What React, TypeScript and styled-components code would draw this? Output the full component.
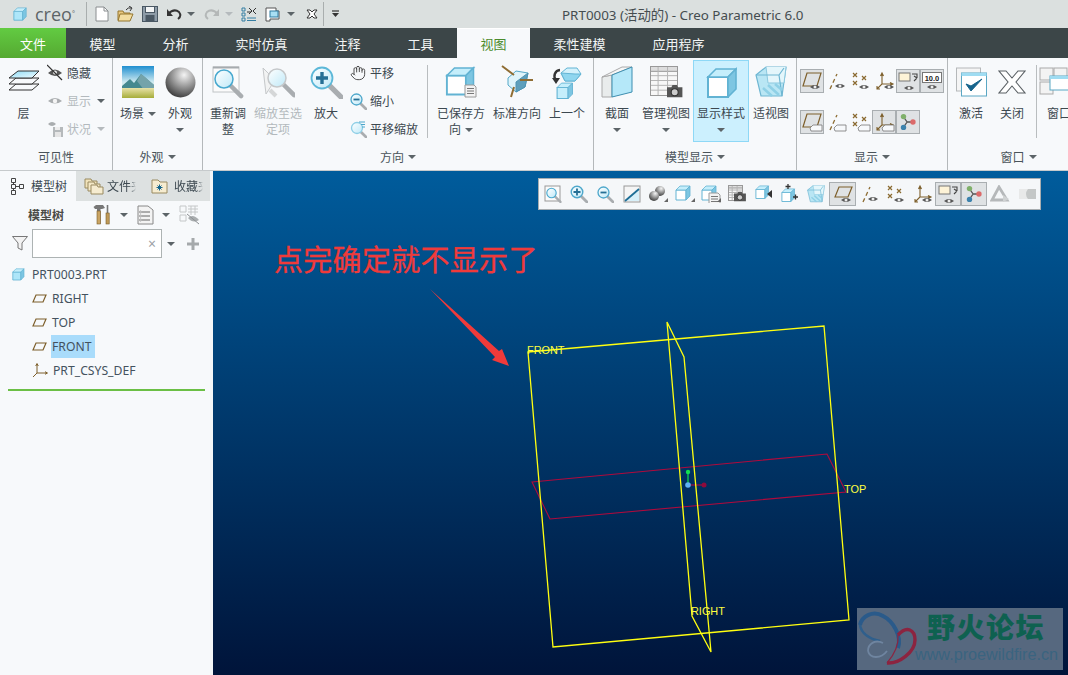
import React from "react";
import styled, { createGlobalStyle } from "styled-components";
import { Hand } from "lucide-react";

const GlobalStyle = createGlobalStyle`
  html, body {
    margin: 0;
    padding: 0;
    background: #f7f9fb;
  }
  body {
    font-family: "Noto Sans", "Noto Sans CJK SC", sans-serif;
    font-size: 12px;
    color: #3c4850;
  }
  * {
    box-sizing: border-box;
  }
`;

const Svg = styled.svg`
  display: block;
  flex-shrink: 0;
`;

type IconProps = { w?: number; h?: number; children: React.ReactNode };

const Ico = ({ w = 18, h = 18, children }: IconProps) => (
  <Svg width={w} height={h} viewBox={`0 0 ${w} ${h}`} fill="none">
    {children}
  </Svg>
);

/* drawing pieces shared by the icons */

const Defs = () => (
  <svg width="0" height="0" style={{ position: "absolute" }}>
    <defs>
      <linearGradient id="sky" x1="0" y1="0" x2="0" y2="1">
        <stop offset="0" stopColor="#1f8fd0" />
        <stop offset="0.5" stopColor="#cfeaf0" />
        <stop offset="1" stopColor="#e8efe0" />
      </linearGradient>
      <linearGradient id="ground" x1="0" y1="0" x2="0" y2="1">
        <stop offset="0" stopColor="#e8e2a8" />
        <stop offset="1" stopColor="#a6ad3a" />
      </linearGradient>
      <radialGradient id="ball" cx="0.62" cy="0.25" r="0.85">
        <stop offset="0" stopColor="#f4f4f4" />
        <stop offset="0.45" stopColor="#9a9a9a" />
        <stop offset="1" stopColor="#2c2c2c" />
      </radialGradient>
      <linearGradient id="layerTop" x1="0" y1="0" x2="1" y2="1">
        <stop offset="0" stopColor="#8fdcf5" />
        <stop offset="1" stopColor="#f0fbff" />
      </linearGradient>
      <linearGradient id="lens" x1="0" y1="0" x2="1" y2="1">
        <stop offset="0" stopColor="#ffffff" />
        <stop offset="1" stopColor="#bfe9f8" />
      </linearGradient>
    </defs>
  </svg>
);

const Eye = ({ x, y }: { x: number; y: number }) => (
  <g transform={`translate(${x} ${y})`}>
    <path d="M-5 0Q0-4 5 0Q0 4-5 0Z" fill="#555" />
    <circle r="1.5" fill="#eee" />
  </g>
);

const Cross = ({ x, y, c = "#8a6a30" }: { x: number; y: number; c?: string }) => (
  <path d={`M${x - 2} ${y - 2}l4 4m0-4l-4 4`} stroke={c} strokeWidth="1.2" />
);

const Tag = ({ x, y }: { x: number; y: number }) => (
  <path
    d={`M${x} ${y + 3}l3-3h9v6h-11z`}
    fill="#f7f9fb"
    stroke="#777"
    strokeWidth="0.8"
  />
);

const Plane = () => (
  <path d="M3 14L7 4H20L16 14Z" stroke="#7d5f2b" strokeWidth="1.2" />
);
const Axis = () => (
  <path d="M5 19L12 4" stroke="#8d6c32" strokeWidth="1.3" strokeDasharray="4 3" />
);
const Points = () => (
  <>
    <Cross x={6} y={5} />
    <Cross x={15} y={8} />
    <Cross x={6} y={13} />
  </>
);
const Csys = () => (
  <path
    d="M4 19L9 14V4M7.5 6L9 3L10.5 6M9 14H19M17 12.5L20 14L17 15.5M4 16V19H7"
    stroke="#7d5f2b"
    strokeWidth="1.1"
  />
);

const Magnifier = ({ x = 0, y = 0, r = 6, c = "#48a9cf", t = 0.24 }: { x?: number; y?: number; r?: number; c?: string; t?: number }) => (
  <>
    <path
      d={`M${x + r * 0.72} ${y + r * 0.72}L${x + r * 1.9} ${y + r * 1.9}`}
      stroke="#a9adb0"
      strokeWidth={r * 0.5}
      strokeLinecap="round"
    />
    <circle cx={x} cy={y} r={r} fill="url(#lens)" stroke={c} strokeWidth={r * t} />
  </>
);

const CubeShape = ({ s = 1, x = 0, y = 0, face = "#fff" }: { s?: number; x?: number; y?: number; face?: string }) => (
  <g transform={`translate(${x} ${y}) scale(${s})`}>
    <path d="M1 5H11V15H1Z" fill={face} stroke="#62b3d3" strokeWidth="1" />
    <path d="M1 5L5 1H15L11 5Z" fill="#c5eefb" stroke="#62b3d3" strokeWidth="0.8" />
    <path d="M11 5L15 1V11L11 15Z" fill="#7dc6e2" stroke="#62b3d3" strokeWidth="0.8" />
  </g>
);

const DocLines = ({ x, y }: { x: number; y: number }) => (
  <g transform={`translate(${x} ${y})`}>
    <path d="M0 0H9L11 2V12H0Z" fill="#f3f3f3" stroke="#9a9a9a" />
    <path d="M2 3.5H9M2 6H9M2 8.5H9" stroke="#777" />
  </g>
);

const Camera = ({ x, y, s = 1 }: { x: number; y: number; s?: number }) => (
  <g transform={`translate(${x} ${y}) scale(${s})`}>
    <path d="M0 3H4L5 1H9L10 3H14V12H0Z" fill="#555" />
    <circle cx="7" cy="7.5" r="3.2" fill="#ccc" stroke="#333" />
  </g>
);

const TableShape = ({ w, h }: { w: number; h: number }) => (
  <>
    <rect x="0.5" y="0.5" width={w} height={h} fill="#f7f7f7" stroke="#999" />
    <rect x="0.5" y="0.5" width={w} height={h / 6} fill="#ddd" stroke="#999" />
    {[2, 3, 4, 5].map((i) => (
      <path key={i} d={`M1 ${(h / 6) * i}H${w}`} stroke="#b5b5b5" />
    ))}
    <path d={`M${w * 0.3} 1V${h}M${w * 0.65} 1V${h}`} stroke="#b5b5b5" />
  </>
);

const Glass = ({ s = 1 }: { s?: number }) => (
  <g transform={`scale(${s})`}>
    <path d="M1 9L11 1H31L27 30H6Z" fill="#b9e6f4" stroke="#6fb6d2" strokeWidth="1.2" />
    <path d="M11 1L13 17H29L31 1" fill="#e4f6fb" stroke="#8cc9df" />
    <path d="M1 9H24L27 30M24 9L29 2" stroke="#6fb6d2" strokeWidth="1.2" />
    <path d="M8 22L17 30M13 19L24 29M20 18L27 24" stroke="#8fd0e6" strokeWidth="2.5" />
  </g>
);

/* title bar */

const TitleBar = styled.header`
  height: 28px;
  background: #dbe0df;
  display: flex;
  align-items: center;
  flex-shrink: 0;
`;

const LogoBox = styled.div`
  display: flex;
  align-items: center;
  gap: 8px;
  width: 86px;
  padding-left: 13px;
  height: 100%;
`;

const LogoText = styled.span`
  font-family: "Open Sans", sans-serif;
  font-size: 18px;
  color: #5d6568;
  line-height: 28px;

  sup {
    font-size: 7px;
    vertical-align: 5px;
    line-height: 0;
  }
`;

const BarDivider = styled.div`
  width: 1px;
  height: 24px;
  background: #a9aeae;
`;

const QuickBar = styled.div`
  display: flex;
  align-items: center;
  height: 100%;
`;

const QuickSlot = styled.div<{ $w: number }>`
  width: ${(p) => p.$w}px;
  display: flex;
  align-items: center;
  justify-content: center;
`;

const WindowTitle = styled.div`
  margin-left: 216px;
  font-size: 13.4px;
  color: #454d50;
  white-space: nowrap;
`;

/* tabs */

const TabBar = styled.nav`
  height: 30px;
  background: #3c4648;
  display: flex;
  flex-shrink: 0;
`;

const FileTab = styled.div`
  width: 66px;
  background: linear-gradient(180deg, #62cb42 0%, #55a931 100%);
  color: #fff;
  font-size: 13px;
  display: flex;
  align-items: center;
  justify-content: center;
`;

const Tab = styled.div<{ $active?: boolean }>`
  padding: 0 23.5px;
  font-size: 13px;
  display: flex;
  align-items: center;
  color: ${(p) => (p.$active ? "#4b8b2c" : "#f3f5f5")};
  background: ${(p) => (p.$active ? "#f7f9fb" : "transparent")};
  border-top: ${(p) => (p.$active ? "1px solid #fff" : "0")};
`;

/* ribbon */

const Ribbon = styled.section`
  height: 113px;
  background: #f7f9fb;
  border-bottom: 1px solid #c6cacc;
  display: flex;
  flex-shrink: 0;
  overflow: hidden;
`;

const Group = styled.div<{ $w: number }>`
  width: ${(p) => p.$w}px;
  height: 112px;
  flex-shrink: 0;
  border-right: 1px solid #b4b8ba;
  display: flex;
  flex-direction: column;
  overflow: hidden;

  &:last-child {
    border-right: 0;
  }
`;

const GroupBody = styled.div`
  height: 89px;
  display: flex;
  align-items: flex-start;
`;

const GroupLabel = styled.div<{ $shift?: number }>`
  height: 20px;
  display: flex;
  align-items: center;
  justify-content: center;
  gap: 4px;
  padding-left: ${(p) => p.$shift ?? 0}px;
  color: #4a545a;
  white-space: nowrap;
`;

const Caret = styled.i<{ $grey?: boolean }>`
  display: inline-block;
  flex-shrink: 0;
  width: 0;
  height: 0;
  border-left: 4px solid transparent;
  border-right: 4px solid transparent;
  border-top: 4px solid ${(p) => (p.$grey ? "#b5babd" : "#5c6468")};
`;

const BigButton = styled.div<{ $w: number; $grey?: boolean; $on?: boolean }>`
  width: ${(p) => p.$w}px;
  flex-shrink: 0;
  height: ${(p) => (p.$on ? "82px" : "auto")};
  margin-top: ${(p) => (p.$on ? "2px" : "0")};
  padding-top: ${(p) => (p.$on ? "3px" : "6px")};
  background: ${(p) => (p.$on ? "#ccf0fe" : "transparent")};
  border: ${(p) => (p.$on ? "1px solid #8ed8f6" : "0")};
  color: ${(p) => (p.$grey ? "#b3b9bd" : "#3c4850")};
  display: flex;
  flex-direction: column;
  align-items: center;
  text-align: center;
`;

const BigIcon = styled.div`
  height: 36px;
  display: flex;
  align-items: center;
  justify-content: center;
`;

const BigText = styled.div`
  margin-top: 6px;
  line-height: 16px;
  white-space: nowrap;
`;

const CaretLine = styled.div`
  height: 16px;
  display: flex;
  align-items: center;
  justify-content: center;
`;

const InlineCaret = styled(Caret)`
  margin-left: 4px;
  vertical-align: 2px;
`;

const RowCaret = styled(Caret)`
  margin-left: 2px;
`;

const SmallColumn = styled.div<{ $w: number }>`
  width: ${(p) => p.$w}px;
  flex-shrink: 0;
  padding-top: 1px;
  display: flex;
  flex-direction: column;
`;

const SmallRow = styled.div<{ $grey?: boolean; $gap?: number }>`
  height: 28px;
  display: flex;
  align-items: center;
  gap: ${(p) => p.$gap ?? 4}px;
  color: ${(p) => (p.$grey ? "#b3b9bd" : "#3c4850")};
  white-space: nowrap;
`;

const VSep = styled.div<{ $mr?: number }>`
  width: 1px;
  height: 73px;
  margin-top: 7px;
  margin-right: ${(p) => p.$mr ?? 0}px;
  background: #b9bdbf;
  flex-shrink: 0;
`;

const Pad = styled.div<{ $w: number }>`
  width: ${(p) => p.$w}px;
  flex-shrink: 0;
`;

const DisplayGrid = styled.div`
  margin: 11px 0 0 3px;
  display: grid;
  grid-template-columns: repeat(6, 24px);
  grid-auto-rows: 24px;
  row-gap: 17px;
`;

const Cell = styled.div<{ $on?: boolean }>`
  display: flex;
  align-items: center;
  justify-content: center;
  background: ${(p) => (p.$on ? "#dfe2e4" : "transparent")};
  border: 1px solid ${(p) => (p.$on ? "#a9aeb1" : "transparent")};
`;

/* main area */

const Main = styled.main`
  flex: 1;
  display: flex;
  min-height: 0;
`;

const Panel = styled.aside`
  width: 213px;
  flex-shrink: 0;
  background: #f7f9fb;
  border-right: 3px solid #f3f6f8;
  display: flex;
  flex-direction: column;
`;

const PanelTabs = styled.div`
  height: 30px;
  background: #dde1e1;
  display: flex;
`;

const PanelTab = styled.div<{ $w: number; $active?: boolean; $gap: number; $pad: number }>`
  width: ${(p) => p.$w}px;
  padding-left: ${(p) => p.$pad}px;
  gap: ${(p) => p.$gap}px;
  background: ${(p) => (p.$active ? "#f7f9fb" : "transparent")};
  display: flex;
  align-items: center;
  white-space: nowrap;
  overflow: hidden;
  flex-shrink: 0;
`;

const FadedText = styled.span`
  display: block;
  width: 29px;
  overflow: hidden;
  -webkit-mask-image: linear-gradient(90deg, #000 78%, transparent 100%);
  mask-image: linear-gradient(90deg, #000 78%, transparent 100%);
`;

const TreeTools = styled.div`
  height: 28px;
  padding-left: 28px;
  display: flex;
  align-items: center;
`;

const TreeToolsTitle = styled.span`
  width: 65px;
  font-weight: 700;
  color: #4a4a46;
`;

const FilterRow = styled.div`
  height: 29px;
  padding-left: 12px;
  display: flex;
  align-items: center;
`;

const SearchBox = styled.div`
  width: 130px;
  height: 29px;
  margin-left: 4px;
  margin-right: 5px;
  background: #fff;
  border: 1px solid #adb3b3;
  display: flex;
  align-items: center;
  justify-content: flex-end;
  padding-right: 5px;
  color: #9ca2a5;
  font-size: 14px;
`;

const Tree = styled.ul`
  list-style: none;
  margin: 5px 0 0 8px;
  padding: 0 0 7px;
  width: 197px;
  border-bottom: 2px solid #6bbf45;
`;

const TreeRow = styled.li<{ $depth?: number }>`
  height: 24px;
  padding-left: ${(p) => (p.$depth ? 24 : 4)}px;
  display: flex;
  align-items: center;
  gap: ${(p) => (p.$depth ? 4 : 6)}px;
  white-space: nowrap;
  color: #44525e;

  &:first-child {
    height: 23px;
  }
`;

const TreeText = styled.span<{ $sel?: boolean }>`
  height: 23px;
  line-height: 23px;
  padding: 0 ${(p) => (p.$sel ? 4 : 2)}px 0 1px;
  font-size: 12.2px;
  background: ${(p) => (p.$sel ? "#a9dcfb" : "transparent")};
`;

const Viewport = styled.div`
  position: relative;
  flex: 1;
  overflow: hidden;
  background: linear-gradient(180deg, #005c9c 0%, #00143a 100%);
`;

const Scene = styled.svg`
  position: absolute;
  left: 0;
  top: 0;
`;

const FloatBar = styled.div`
  position: absolute;
  left: 325px;
  top: 7px;
  width: 503px;
  height: 32px;
  padding-left: 1px;
  background: #f5f7f9;
  border: 1px solid #a8adb0;
  display: flex;
  align-items: center;
`;

const FloatCell = styled.div<{ $on?: boolean }>`
  width: 26.5px;
  height: 24px;
  display: flex;
  align-items: center;
  justify-content: center;
  background: ${(p) => (p.$on ? "#dfe2e4" : "transparent")};
  box-shadow: ${(p) => (p.$on ? "inset 0 0 0 1px #a9aeb1" : "none")};
`;

const Note = styled.div`
  position: absolute;
  left: 61px;
  top: 69px;
  font-family: "Noto Sans CJK SC", sans-serif;
  font-size: 29px;
  line-height: 36px;
  letter-spacing: 0.3px;
  color: #f03a3a;
  -webkit-text-stroke: 0.3px #f03a3a;
  white-space: nowrap;
`;

const Watermark = styled.div`
  position: absolute;
  left: 644px;
  top: 437px;
  width: 206px;
  height: 62px;
  background: #56687f;
  display: flex;
`;

const MarkText = styled.div`
  display: flex;
  flex-direction: column;
  align-items: flex-end;
  flex: 1;
  padding-right: 5px;
`;

const MarkTitle = styled.div`
  font-family: "Noto Sans CJK SC", sans-serif;
  font-weight: 900;
  font-size: 28px;
  line-height: 36px;
  letter-spacing: 1.5px;
  color: #0e6150;
  margin-right: 13px;
`;

const MarkUrl = styled.div`
  font-family: "Liberation Sans", sans-serif;
  font-size: 16.2px;
  line-height: 20px;
  color: #3a6480;
  white-space: nowrap;
  margin-left: -6px;
`;

/* icons */

const hideIcon = (
  <Ico w={16} h={18}>
    <path d="M1 9Q8 2 15 9Q8 15 1 9Z" fill="#555" />
    <circle cx="8" cy="8.5" r="2" fill="#eee" />
    <path d="M0 1L15 16" stroke="#333" strokeWidth="1.2" />
  </Ico>
);

const showIcon = (
  <Ico w={16} h={16}>
    <path d="M1 8Q8 2 15 8Q8 13 1 8Z" fill="#a9adaf" />
    <circle cx="8" cy="8" r="2.2" fill="#f4f4f4" />
  </Ico>
);

const stateIcon = (
  <Ico w={16} h={18}>
    <path d="M1 4Q5 0 9 4Q5 8 1 4Z" fill="#a9adaf" />
    <rect x="6" y="7" width="10" height="10" fill="#b5b9bb" />
    <rect x="8" y="7" width="5" height="3" fill="#eee" />
    <rect x="8" y="12" width="6" height="5" fill="#e5e5e5" />
  </Ico>
);

const layersIcon = (
  <Ico w={32} h={26}>
    <path d="M1 21L8 15H31L24 21Z" fill="#f7f9fb" stroke="#333" />
    <path d="M1 15L8 9H31L24 15Z" fill="#f7f9fb" stroke="#333" />
    <path d="M1 9L10 2H31L24 9Z" fill="url(#layerTop)" stroke="#333" />
  </Ico>
);

const sceneIcon = (
  <Ico w={32} h={32}>
    <rect width="32" height="32" fill="url(#sky)" />
    <path d="M0 20L8 13L12 17L19 8L32 19V26H0Z" fill="#45898f" />
    <path d="M15 15L19 8L23 11L32 19V24L22 24Z" fill="#75a3aa" />
    <rect y="22" width="32" height="10" fill="url(#ground)" />
  </Ico>
);

const sphereIcon = (
  <Ico w={31} h={31}>
    <circle cx="15.5" cy="15.5" r="15" fill="url(#ball)" />
  </Ico>
);

const refitIcon = (
  <Ico w={33} h={33}>
    <rect x="1" y="1" width="26" height="25" fill="#fbfbfb" stroke="#c0c4c6" />
    <path d="M1 1.5H27" stroke="#a6abae" strokeWidth="2" />
    <Magnifier x={12} y={13} r={9} t={0.17} />
  </Ico>
);

const zoomSelIcon = (
  <Ico w={33} h={33}>
    <path d="M1 2L13 14L4 28Z" fill="#f2f3f3" stroke="#c5c8ca" />
    <path d="M8 24L14 30" stroke="#d5d7d8" strokeWidth="4" />
    <Magnifier x={15} y={12} r={9} c="#c5c8ca" t={0.17} />
  </Ico>
);

const zoomInIcon = (
  <Ico w={33} h={33}>
    <Magnifier x={12} y={12} r={10.5} c="#5cb8d8" t={0.17} />
    <path d="M12 6V18M6 12H18" stroke="#256f95" strokeWidth="3.4" />
  </Ico>
);

const zoomOutIcon = (
  <Ico w={17} h={17}>
    <Magnifier x={6.5} y={6.5} r={5.5} c="#4da7cb" />
    <path d="M3.5 6.5H9.5" stroke="#256f95" strokeWidth="1.8" />
  </Ico>
);

const panZoomIcon = (
  <Ico w={17} h={17}>
    <Magnifier x={7} y={7} r={5.5} c="#8fcfe6" />
    <path d="M9 1H15M11 3.5H15M12 6H15" stroke="#4da7cb" />
  </Ico>
);

const savedViewIcon = (
  <Ico w={34} h={34}>
    <CubeShape s={1.9} x={1} y={1} />
    <DocLines x={21} y={20} />
  </Ico>
);

const standardViewIcon = (
  <Ico w={34} h={34}>
    <path d="M8 13L16 6L28 8L25 22L16 27L8 20Z" fill="#dff4fb" stroke="#55a8c8" />
    <path d="M16 17L28 8L25 22L16 27Z" fill="#5e9fbc" stroke="#4e93b1" />
    <path d="M2 1L14 10M20 15H33M11 32L14 22" stroke="#8f6d33" strokeWidth="2" />
  </Ico>
);

const prevViewIcon = (
  <Ico w={34} h={34}>
    <path d="M11 8L17 3H27L31 9L25 16H15Z" fill="#d3f1fb" stroke="#63b4d4" />
    <path d="M11 8L25 9L31 9L25 16H15Z" fill="#8fd6ef" stroke="#63b4d4" />
    <CubeShape s={1.1} x={6} y={17} face="#c5eefb" />
    <path d="M10 5A6 6 0 0 0 6 15" stroke="#333" strokeWidth="2.4" />
    <path d="M2 13L10 13L6 19Z" fill="#333" />
  </Ico>
);

const sectionIcon = (
  <Ico w={32} h={32}>
    <path d="M1 11L11 9V31H1Z" fill="#e9ecec" stroke="#aaa" />
    <path d="M1 11L21 1H31L11 9Z" fill="#f7f7f7" stroke="#aaa" />
    <path d="M11 9L31 1V26L11 31Z" fill="#b5e8f9" stroke="#3d8eb0" />
  </Ico>
);

const manageIcon = (
  <Ico w={33} h={33}>
    <TableShape w={27} h={29} />
    <Camera x={17} y={18} s={1.1} />
  </Ico>
);

const styleIcon = (
  <Ico w={32} h={32}>
    <CubeShape s={2} x={1} y={1} />
  </Ico>
);

const closeIcon = (
  <Ico w={28} h={24}>
    <path
      d="M1 1H8L14 8L20 1H27L18 12L27 23H20L14 16L8 23H1L10 12Z"
      fill="#fff"
      stroke="#5a6064"
      strokeWidth="1.1"
    />
  </Ico>
);

const activateIcon = (
  <Ico w={31} h={30}>
    <rect x="0.5" y="1" width="24" height="23" fill="#f5f5f5" stroke="#b5b8ba" />
    <rect x="5.5" y="6" width="25" height="23" fill="#fff" stroke="#5aa7c4" />
    <rect x="5.5" y="6" width="25" height="3" fill="#9fdcf2" />
    <path d="M10 17L15 24L26 12L15 19Z" fill="#17648c" stroke="#17648c" />
  </Ico>
);

const windowsIcon = (
  <Ico w={40} h={30}>
    <rect x="1" y="1" width="13" height="12" fill="#f3f3f3" stroke="#aaa" />
    <rect x="15" y="1" width="13" height="9" fill="#f3f3f3" stroke="#aaa" />
    <rect x="1" y="15" width="13" height="12" fill="#f3f3f3" stroke="#aaa" />
    <rect x="11" y="9" width="26" height="14" fill="#fff" stroke="#5aa7c4" />
    <rect x="11" y="9" width="26" height="3" fill="#9fdcf2" />
  </Ico>
);

const repaintIcon = (
  <Ico w={18} h={18}>
    <rect x="1" y="1" width="16" height="16" fill="#f5f5f5" stroke="#999" />
    <path d="M2 16L16 3V16Z" fill="#d8f0f9" />
    <path d="M2 16L16 4" stroke="#1e6e96" strokeWidth="1.8" />
  </Ico>
);

const shadeIcon = (
  <Ico w={20} h={18}>
    <circle cx="12" cy="6" r="5" fill="url(#ball)" />
    <circle cx="6" cy="11" r="5" fill="url(#ball)" />
    <path d="M16 17H20V13Z" fill="#666" />
  </Ico>
);

const cubeCornerIcon = (
  <Ico w={20} h={18}>
    <CubeShape />
    <path d="M16 17H20V13Z" fill="#666" />
  </Ico>
);

const savedSmallIcon = (
  <Ico w={20} h={18}>
    <CubeShape />
    <DocLines x={8} y={8} />
    <path d="M16 17H20V13Z" fill="#666" />
  </Ico>
);

const manageSmallIcon = (
  <Ico w={18} h={18}>
    <TableShape w={14} h={15} />
    <Camera x={6} y={6} s={0.85} />
  </Ico>
);

const cubeInIcon = (
  <Ico w={18} h={18}>
    <CubeShape s={0.9} />
    <path d="M12 9L17 5V13Z" fill="#333" />
  </Ico>
);

const cubePlusIcon = (
  <Ico w={18} h={20}>
    <CubeShape s={0.9} y={4} />
    <path d="M7 0V5M4.5 2.5H9.5M12 13H17M14.5 10.5V15.5" stroke="#333" strokeWidth="1.3" />
  </Ico>
);

const spinIcon = (
  <Svg width={18} height={18} viewBox="0 0 20 20" fill="none">
    <path d="M4 3L9 10L4 17M9 10H16" stroke="#555" strokeWidth="1.4" />
    <circle cx="5" cy="4" r="3" fill="#7fb06a" />
    <circle cx="15.5" cy="10" r="3" fill="#db6a6a" />
    <circle cx="5" cy="16" r="3" fill="#3d83ad" />
  </Svg>
);

const markIcon = (inner: React.ReactNode, bottom: React.ReactNode) => (
  <Ico w={22} h={22}>
    {inner}
    {bottom}
  </Ico>
);

const noteMark = (
  <>
    <rect x="2" y="3" width="11" height="8" fill="#fdf3d7" stroke="#777" />
    <path d="M15 4H20V8M20 8L17 6M20 8L17 11" stroke="#444" strokeWidth="1.1" />
  </>
);

const numberMark = (
  <>
    <rect x="1.5" y="2.5" width="19" height="10" fill="#fff" stroke="#777" />
    <text
      x="11"
      y="10.5"
      textAnchor="middle"
      fontFamily="Liberation Sans, sans-serif"
      fontWeight="700"
      fontSize="7.5"
      fill="#222"
    >
      10.0
    </text>
  </>
);

const PlanePart = () => (
  <path d="M2 16L6 3H20L16 16Z" fill="none" stroke="#7d5f2b" strokeWidth="1.2" />
);

const displayCells: [React.ReactNode, boolean][] = [
  [markIcon(<PlanePart />, <Eye x={14} y={17} />), true],
  [markIcon(<Axis />, <Eye x={15} y={16} />), false],
  [markIcon(<Points />, <Eye x={15} y={17} />), false],
  [markIcon(<Csys />, <Eye x={16} y={17} />), false],
  [markIcon(noteMark, <Eye x={12} y={18} />), true],
  [markIcon(numberMark, <Eye x={11} y={17} />), true],
  [markIcon(<PlanePart />, <Tag x={9} y={14} />), true],
  [markIcon(<Axis />, <Tag x={9} y={14} />), false],
  [markIcon(<Points />, <Tag x={9} y={14} />), false],
  [markIcon(<Csys />, <Tag x={9} y={14} />), true],
  [spinIcon, true],
];

const toolbarCells: [React.ReactNode, boolean][] = [
  [
    <Ico w={18} h={18} key="a">
      <rect x="1" y="1" width="15" height="15" fill="#fbfbfb" stroke="#999" />
      <Magnifier x={7.5} y={8} r={4.7} />
    </Ico>,
    false,
  ],
  [
    <Ico w={18} h={18} key="b">
      <Magnifier x={7} y={7} r={5.8} c="#4da7cb" />
      <path d="M7 3.5V10.5M3.5 7H10.5" stroke="#256f95" strokeWidth="1.8" />
    </Ico>,
    false,
  ],
  [zoomOutIcon, false],
  [repaintIcon, false],
  [shadeIcon, false],
  [cubeCornerIcon, false],
  [savedSmallIcon, false],
  [manageSmallIcon, false],
  [cubeInIcon, false],
  [cubePlusIcon, false],
  [
    <Ico w={18} h={18} key="g">
      <Glass s={0.56} />
    </Ico>,
    false,
  ],
  [markIcon(<Plane />, <Eye x={14} y={17} />), true],
  [markIcon(<Axis />, <Eye x={15} y={16} />), false],
  [markIcon(<Points />, <Eye x={15} y={17} />), false],
  [markIcon(<Csys />, <Eye x={16} y={17} />), false],
  [markIcon(noteMark, <Eye x={12} y={18} />), true],
  [spinIcon, true],
  [
    <Ico w={20} h={18} key="t">
      <path d="M9 2L17 15H2Z" stroke="#b5b8ba" strokeWidth="2.8" />
      <path d="M13 10L19 14L13 17Z" fill="#cfd2d3" />
    </Ico>,
    false,
  ],
  [
    <Ico w={20} h={14} key="u">
      <path d="M2 2H19V12H2Z" fill="#c4c7c7" />
      <path d="M2 2H11Q7 7 11 12H2Z" fill="#e8e9e9" />
    </Ico>,
    false,
  ],
];

const treeNodeIcon = (
  <Ico w={14} h={19}>
    <path d="M1.5 1.5H5.5V5.5H1.5ZM1.5 7.5H5.5V11.5H1.5ZM1.5 13.5H5.5V17.5H1.5Z" stroke="#444" />
    <path d="M9.5 7.5H13.5V11.5H9.5Z" stroke="#444" />
    <path d="M3.5 5.5V7.5M3.5 11.5V13.5M5.5 9.5H9.5" stroke="#444" />
  </Ico>
);

const folderStackIcon = (
  <Ico w={20} h={18}>
    <path d="M1 2H7L8 4H13V11H1Z" fill="#f1e3bb" stroke="#998a60" />
    <path d="M4 5H10L11 7H16V14H4Z" fill="#f4e8c7" stroke="#998a60" />
    <path d="M7 8H13L14 10H19V17H7Z" fill="#f6ecd0" stroke="#998a60" />
  </Ico>
);

const favFolderIcon = (
  <Ico w={17} h={16}>
    <path d="M1 2H7L9 4H16V15H1Z" fill="#f6ecd0" stroke="#998a60" />
    <path d="M8.5 6.5V12.5M5.5 9.5H11.5M6.5 7.5L10.5 11.5M10.5 7.5L6.5 11.5" stroke="#13648c" strokeWidth="1" />
  </Ico>
);

const toolsIcon = (
  <Ico w={18} h={20}>
    <path d="M0.5 2L3 0H10L12 3L9 4H7.5V19H4V4H2Z" fill="#777" />
    <rect x="4" y="6" width="3.5" height="13" fill="#c9a463" stroke="#7a5c2a" strokeWidth="0.6" />
    <path d="M14.5 0V8" stroke="#777" strokeWidth="1.6" />
    <rect x="13" y="8" width="3.2" height="11" fill="#bf9a58" stroke="#7a5c2a" strokeWidth="0.6" />
  </Ico>
);

const listIcon = (
  <Ico w={17} h={20}>
    <path d="M1 1H11L16 5V19H1Z" fill="#f3f3f3" stroke="#888" />
    <path d="M5 7H13M5 11H13M5 15H13" stroke="#666" />
    <circle cx="3.5" cy="7" r="1" stroke="#666" strokeWidth="0.6" />
    <circle cx="3.5" cy="11" r="1" stroke="#666" strokeWidth="0.6" />
    <circle cx="3.5" cy="15" r="1" stroke="#666" strokeWidth="0.6" />
  </Ico>
);

const treeEyeIcon = (
  <Ico w={21} h={20}>
    <path d="M1 1H7V7H1ZM1 10H7V16H1ZM9 1H19M9 4H19M9 7H19M12 1V10M16 1V10" stroke="#c4c7c8" />
    <path d="M9 13Q14 8 20 15Q14 19 9 13Z" fill="#a9adaf" />
    <path d="M8 9L20 19" stroke="#8d9194" />
  </Ico>
);

const filterIcon = (
  <Ico w={16} h={15}>
    <path d="M0.5 0.5H15.5L10 7V14L6 12V7Z" fill="#f3f3f3" stroke="#777" />
  </Ico>
);

const planeTreeIcon = (
  <Ico w={15} h={9}>
    <path d="M1 8L4 1H14L11 8Z" stroke="#7d5f2b" strokeWidth="1.2" />
  </Ico>
);

const csysTreeIcon = (
  <Ico w={16} h={15}>
    <path d="M1 14L5 10V1M3.7 3L5 0.5L6.3 3M5 10H15M13 8.7L15.5 10L13 11.3" stroke="#7d5f2b" />
  </Ico>
);

const App = () => {
  return (
    <Page>
      <GlobalStyle />
      <Defs />
      <TitleBar>
        <LogoBox>
          <Ico w={14} h={14}>
            <CubeShape s={0.88} face="#aee6f9" />
          </Ico>
          <LogoText>
            creo<sup>°</sup>
          </LogoText>
        </LogoBox>
        <BarDivider />
        <QuickBar>
          <QuickSlot $w={29}>
            <Ico w={14} h={16}>
              <path d="M1 1H9L13 5V15H1Z" fill="#fff" stroke="#8a8e90" />
              <path d="M9 1V5H13" stroke="#8a8e90" />
            </Ico>
          </QuickSlot>
          <QuickSlot $w={18}>
            <Ico w={17} h={16}>
              <path d="M1 5H6L7 7H13V14H1Z" fill="#e8c77f" stroke="#94762f" />
              <path d="M3 8H16L13 15H1Z" fill="#f3dda0" stroke="#94762f" />
              <path d="M9 4Q11 1 14 2M12 0L15 2L13 5" stroke="#333" />
            </Ico>
          </QuickSlot>
          <QuickSlot $w={31}>
            <Ico w={16} h={16}>
              <rect x="0.5" y="0.5" width="15" height="15" fill="#8e9ca8" stroke="#4a5864" />
              <rect x="3.5" y="0.5" width="9" height="6" fill="#f3f5f6" stroke="#4a5864" />
              <rect x="3.5" y="9" width="9" height="6.5" fill="#4a5864" />
            </Ico>
          </QuickSlot>
          <QuickSlot $w={17}>
            <Ico w={16} h={12}>
              <path d="M2 6Q8 0 13 4Q16 8 12 11" stroke="#333" strokeWidth="2" />
              <path d="M1 1V8H7Z" fill="#333" />
            </Ico>
          </QuickSlot>
          <QuickSlot $w={18}>
            <Caret />
          </QuickSlot>
          <QuickSlot $w={24}>
            <Ico w={16} h={12}>
              <path d="M14 6Q8 0 3 4Q0 8 4 11" stroke="#b4b8b8" strokeWidth="2" />
              <path d="M15 1V8H9Z" fill="#b4b8b8" />
            </Ico>
          </QuickSlot>
          <QuickSlot $w={10}>
            <Caret $grey />
          </QuickSlot>
          <QuickSlot $w={29}>
            <Ico w={16} h={16}>
              <path d="M1 2H4V5H1ZM1 7H4V10H1ZM1 12H4V15H1ZM6 12H15M6 14.5H15" stroke="#357ea3" />
              <path d="M6 6H10M8 2L11 5L8 8M15 2L12 5L15 8" stroke="#333" />
            </Ico>
          </QuickSlot>
          <QuickSlot $w={19}>
            <Ico w={16} h={15}>
              <path d="M1 1H11V4H14V12H5V14H1Z" fill="#fff" stroke="#555" />
              <rect x="5" y="4" width="8" height="6" fill="#a8dff3" stroke="#2f7ca1" />
            </Ico>
          </QuickSlot>
          <QuickSlot $w={18}>
            <Caret />
          </QuickSlot>
          <QuickSlot $w={23}>
            <Ico w={12} h={10}>
              <path
                d="M1 1H4L6 3L8 1H11L8 5L11 9H8L6 7L4 9H1L4 5Z"
                fill="#fff"
                stroke="#333"
              />
            </Ico>
          </QuickSlot>
          <BarDivider />
          <QuickSlot $w={22}>
            <Ico w={9} h={8}>
              <path d="M1 1H8" stroke="#333" strokeWidth="1.2" />
              <path d="M1 3H8L4.5 7Z" fill="#333" />
            </Ico>
          </QuickSlot>
        </QuickBar>
        <WindowTitle>PRT0003 (活动的) - Creo Parametric 6.0</WindowTitle>
      </TitleBar>

      <TabBar>
        <FileTab>文件</FileTab>
        {["模型", "分析", "实时仿真", "注释", "工具"].map((t) => (
          <Tab key={t}>{t}</Tab>
        ))}
        <Tab $active>视图</Tab>
        {["柔性建模", "应用程序"].map((t) => (
          <Tab key={t}>{t}</Tab>
        ))}
      </TabBar>

      <Ribbon>
        <Group $w={113}>
          <GroupBody>
            <BigButton $w={47}>
              <BigIcon>{layersIcon}</BigIcon>
              <BigText>层</BigText>
            </BigButton>
            <SmallColumn $w={65}>
              <SmallRow>
                {hideIcon}
                <span>隐藏</span>
              </SmallRow>
              <SmallRow $grey>
                {showIcon}
                <span>显示</span>
                <RowCaret />
              </SmallRow>
              <SmallRow $grey>
                {stateIcon}
                <span>状况</span>
                <RowCaret $grey />
              </SmallRow>
            </SmallColumn>
          </GroupBody>
          <GroupLabel>可见性</GroupLabel>
        </Group>

        <Group $w={90}>
          <GroupBody>
            <Pad $w={6} />
            <BigButton $w={38}>
              <BigIcon>{sceneIcon}</BigIcon>
              <BigText>
                场景
                <InlineCaret />
              </BigText>
            </BigButton>
            <Pad $w={4} />
            <BigButton $w={38}>
              <BigIcon>{sphereIcon}</BigIcon>
              <BigText>外观</BigText>
              <CaretLine>
                <Caret />
              </CaretLine>
            </BigButton>
          </GroupBody>
          <GroupLabel>
            外观
            <Caret />
          </GroupLabel>
        </Group>

        <Group $w={391}>
          <GroupBody>
            <Pad $w={1} />
            <BigButton $w={48}>
              <BigIcon>{refitIcon}</BigIcon>
              <BigText>
                重新调
                <br />整
              </BigText>
            </BigButton>
            <BigButton $w={52} $grey>
              <BigIcon>{zoomSelIcon}</BigIcon>
              <BigText>
                缩放至选
                <br />
                定项
              </BigText>
            </BigButton>
            <BigButton $w={44}>
              <BigIcon>{zoomInIcon}</BigIcon>
              <BigText>放大</BigText>
            </BigButton>
            <Pad $w={2} />
            <SmallColumn $w={77}>
              <SmallRow $gap={4}>
                <Hand size={16} strokeWidth={1.4} color="#444" />
                <span>平移</span>
              </SmallRow>
              <SmallRow $gap={3}>
                {zoomOutIcon}
                <span>缩小</span>
              </SmallRow>
              <SmallRow $gap={3}>
                {panZoomIcon}
                <span>平移缩放</span>
              </SmallRow>
            </SmallColumn>
            <VSep $mr={7} />
            <BigButton $w={52}>
              <BigIcon>{savedViewIcon}</BigIcon>
              <BigText>
                已保存方
                <br />向
                <InlineCaret />
              </BigText>
            </BigButton>
            <Pad $w={2} />
            <BigButton $w={56}>
              <BigIcon>{standardViewIcon}</BigIcon>
              <BigText>标准方向</BigText>
            </BigButton>
            <BigButton $w={44}>
              <BigIcon>{prevViewIcon}</BigIcon>
              <BigText>上一个</BigText>
            </BigButton>
          </GroupBody>
          <GroupLabel>
            方向
            <Caret />
          </GroupLabel>
        </Group>

        <Group $w={203}>
          <GroupBody>
            <BigButton $w={46}>
              <BigIcon>{sectionIcon}</BigIcon>
              <BigText>截面</BigText>
              <CaretLine>
                <Caret />
              </CaretLine>
            </BigButton>
            <BigButton $w={52}>
              <BigIcon>{manageIcon}</BigIcon>
              <BigText>管理视图</BigText>
              <CaretLine>
                <Caret />
              </CaretLine>
            </BigButton>
            <Pad $w={1} />
            <BigButton $w={56} $on>
              <BigIcon>{styleIcon}</BigIcon>
              <BigText>显示样式</BigText>
              <CaretLine>
                <Caret />
              </CaretLine>
            </BigButton>
            <BigButton $w={44}>
              <BigIcon>
                <Ico w={32} h={32}>
                  <Glass />
                </Ico>
              </BigIcon>
              <BigText>适视图</BigText>
            </BigButton>
          </GroupBody>
          <GroupLabel>
            模型显示
            <Caret />
          </GroupLabel>
        </Group>

        <Group $w={151}>
          <GroupBody>
            <DisplayGrid>
              {displayCells.map(([icon, on], i) => (
                <Cell $on={on} key={i}>
                  {icon}
                </Cell>
              ))}
            </DisplayGrid>
          </GroupBody>
          <GroupLabel>
            显示
            <Caret />
          </GroupLabel>
        </Group>

        <Group $w={121}>
          <GroupBody>
            <BigButton $w={46}>
              <BigIcon>{activateIcon}</BigIcon>
              <BigText>激活</BigText>
            </BigButton>
            <BigButton $w={36}>
              <BigIcon>{closeIcon}</BigIcon>
              <BigText>关闭</BigText>
            </BigButton>
            <Pad $w={6} />
            <VSep />
            <BigButton $w={44}>
              <BigIcon>{windowsIcon}</BigIcon>
              <BigText>窗口</BigText>
            </BigButton>
          </GroupBody>
          <GroupLabel $shift={20}>
            窗口
            <Caret />
          </GroupLabel>
        </Group>
      </Ribbon>

      <Main>
        <Panel>
          <PanelTabs>
            <PanelTab $w={76} $active $gap={7} $pad={10}>
              {treeNodeIcon}
              <span>模型树</span>
            </PanelTab>
            <PanelTab $w={66} $gap={3} $pad={8}>
              {folderStackIcon}
              <FadedText>文件夹</FadedText>
            </PanelTab>
            <PanelTab $w={68} $gap={6} $pad={9}>
              {favFolderIcon}
              <FadedText>收藏夹</FadedText>
            </PanelTab>
          </PanelTabs>
          <TreeTools>
            <TreeToolsTitle>模型树</TreeToolsTitle>
            {toolsIcon}
            <Pad $w={9} />
            <Caret />
            <Pad $w={9} />
            {listIcon}
            <Pad $w={8} />
            <Caret />
            <Pad $w={9} />
            {treeEyeIcon}
          </TreeTools>
          <FilterRow>
            {filterIcon}
            <SearchBox>×</SearchBox>
            <Caret />
            <Pad $w={12} />
            <Ico w={12} h={12}>
              <path d="M6 0V12M0 6H12" stroke="#a5a9ab" strokeWidth="3" />
            </Ico>
          </FilterRow>
          <Tree>
            <TreeRow>
              <Ico w={13} h={13}>
                <CubeShape s={0.8} face="#aee6f9" />
              </Ico>
              <TreeText>PRT0003.PRT</TreeText>
            </TreeRow>
            <TreeRow $depth={1}>
              {planeTreeIcon}
              <TreeText>RIGHT</TreeText>
            </TreeRow>
            <TreeRow $depth={1}>
              {planeTreeIcon}
              <TreeText>TOP</TreeText>
            </TreeRow>
            <TreeRow $depth={1}>
              {planeTreeIcon}
              <TreeText $sel>FRONT</TreeText>
            </TreeRow>
            <TreeRow $depth={1}>
              {csysTreeIcon}
              <TreeText>PRT_CSYS_DEF</TreeText>
            </TreeRow>
          </Tree>
        </Panel>

        <Viewport>
          <Scene width="855" height="504" viewBox="213 171 855 504" fill="none">
            <g stroke="#b00a3c" strokeWidth="1.1">
              <path d="M532 482L827 454L846 492L550 519Z" />
              <path d="M688 485H704" />
            </g>
            <g stroke="#ffff10" strokeWidth="1.3">
              <path d="M528 352L824 326L849 620L553 647Z" />
              <path d="M667 322L684 357L711 652L692 616Z" />
            </g>
            <path d="M688 485V472" stroke="#12e050" strokeWidth="1.2" />
            <circle cx="688" cy="472" r="2.2" fill="#12e050" />
            <circle cx="704" cy="485" r="2.5" fill="#8d0b3c" />
            <circle cx="688" cy="485" r="2.8" fill="#5fb0f5" />
            <g fill="#ffff40" fontFamily="Liberation Sans, sans-serif" fontSize="10.9">
              <text x="527" y="354">FRONT</text>
              <text x="844" y="493">TOP</text>
              <text x="691" y="615">RIGHT</text>
            </g>
            <path
              d="M430 289L499 351L502 349L509 366L492 360L495 357Z"
              fill="#f03a3a"
            />
          </Scene>
          <FloatBar>
            {toolbarCells.map(([icon, on], i) => (
              <FloatCell $on={on} key={i}>
                {icon}
              </FloatCell>
            ))}
          </FloatBar>
          <Note>点完确定就不显示了</Note>
          <Watermark>
            <Ico w={60} h={60}>
              <path d="M3 17C5 8 16 2 26 8C36 13 45 28 41 40" stroke="#2a5a8a" strokeWidth="4" />
              <path d="M3 17C4 25 12 31 23 33" stroke="#2f5f8c" strokeWidth="2.4" />
              <path d="M30 55C42 56 58 44 58 32C58 22 50 17 41 27" stroke="#8c2440" strokeWidth="3.4" />
              <path d="M30 55C36 48 42 38 41 27" stroke="#8c2440" strokeWidth="1.2" />
              <path d="M11 43C11 36 18 31 26 35M11 43C13 51 24 51 30 43" stroke="#6f85a0" strokeWidth="1.8" />
            </Ico>
            <MarkText>
              <MarkTitle>野火论坛</MarkTitle>
              <MarkUrl>www.proewildfire.cn</MarkUrl>
            </MarkText>
          </Watermark>
        </Viewport>
      </Main>
    </Page>
  );
};

const Page = styled.div`
  width: 1068px;
  height: 675px;
  display: flex;
  flex-direction: column;
  overflow: hidden;
`;

export default App;
